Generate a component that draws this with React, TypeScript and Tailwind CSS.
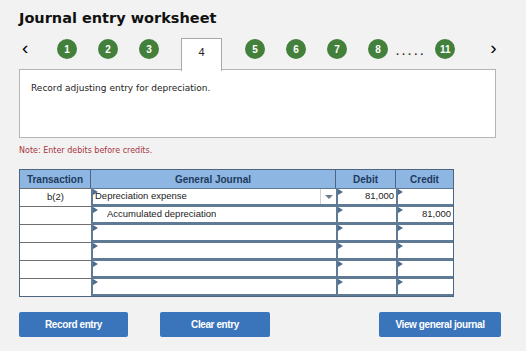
import React from "react";

const steps = ["1", "2", "3"];
const after = ["5", "6", "7", "8"];

function Circle({ n }: { n: string }) {
  return (
    <div className="w-[20px] h-[20px] rounded-full bg-[#43803c] text-white text-[10px] font-bold flex items-center justify-center mt-[1px]">
      {n}
    </div>
  );
}

function Marker() {
  return (
    <span className="absolute left-0 top-0 w-0 h-0 border-t-[3px] border-b-[3px] border-l-[5px] border-t-transparent border-b-transparent border-l-[#4d6d8f]" />
  );
}

function Cell({
  w,
  children,
  align = "left",
  pl = "pl-[2px]",
  dropdown = false,
}: {
  w: string;
  children?: React.ReactNode;
  align?: "left" | "right";
  pl?: string;
  dropdown?: boolean;
}) {
  return (
    <div
      className={`relative ${w} h-full bg-white border-l-2 border-b-2 border-t border-[#5f7a95] flex items-center ${pl} pr-[2px] ${
        align === "right" ? "justify-end" : ""
      }`}
    >
      <Marker />
      <span className="truncate">{children}</span>
      {dropdown && (
        <div className="absolute right-0 top-0 h-full w-[16px] border-l border-[#d0d0d0] flex items-center justify-center">
          <span className="w-0 h-0 border-l-[4px] border-r-[4px] border-t-[4px] border-l-transparent border-r-transparent border-t-[#6b7c8c]" />
        </div>
      )}
    </div>
  );
}

const rows = [
  { t: "b(2)", gj: "Depreciation expense", indent: false, d: "81,000", c: "" },
  { t: "", gj: "Accumulated depreciation", indent: true, d: "", c: "81,000" },
  { t: "", gj: "", indent: false, d: "", c: "" },
  { t: "", gj: "", indent: false, d: "", c: "" },
  { t: "", gj: "", indent: false, d: "", c: "" },
  { t: "", gj: "", indent: false, d: "", c: "" },
];

export default function App() {
  return (
    <div className="w-[526px] h-[351px] bg-[#f2f2f2] px-[19px] pt-[8px] overflow-hidden text-[#222]">
      <h1 className="text-[14.5px] leading-[20px] font-bold font-['DejaVu_Sans',sans-serif] text-[#111]">
        Journal entry worksheet
      </h1>

      {/* step nav */}
      <div className="flex items-start h-[32px] mt-[10px] font-['Liberation_Sans',Arial,sans-serif]">
        <span className="text-[19px] leading-[20px] ml-[3px] w-[35px] text-black">&lsaquo;</span>
        <div className="flex gap-[21px]">
          {steps.map((s) => (
            <Circle key={s} n={s} />
          ))}
        </div>
        <div className="ml-[22px] w-[41px] h-[33px] bg-white border border-b-0 border-[#a8a8a8] flex justify-center pt-[5px] text-[11px] relative z-10">
          4
        </div>
        <div className="flex gap-[21px] ml-[23px]">
          {after.map((s) => (
            <Circle key={s} n={s} />
          ))}
        </div>
        <span className="ml-[8px] mt-[5px] text-[11px] font-bold tracking-[3px] text-[#333]">.....</span>
        <div className="ml-[9px]">
          <Circle n="11" />
        </div>
        <span className="ml-[35px] text-[19px] leading-[20px] text-black">&rsaquo;</span>
      </div>

      {/* content box */}
      <div className="w-[477px] h-[69px] -mt-[1px] bg-white border border-[#b4b4b4] px-[11px] pt-[12px]">
        <p className="text-[9px] font-['DejaVu_Sans',sans-serif] text-[#222]">
          Record adjusting entry for depreciation.
        </p>
      </div>

      <p className="mt-[7px] text-[8px] font-['DejaVu_Sans',sans-serif] text-[#a8353d]">
        Note: Enter debits before credits.
      </p>

      {/* table */}
      <div className="mt-[12px] w-[435px] border border-[#4d6580] font-['Liberation_Sans',Arial,sans-serif] text-[9.5px]">
        <div className="flex h-[18px] bg-[#8db6e3] text-[#1e3a5c] font-bold text-[10px]">
          <div className="w-[71px] flex items-center justify-center border-r border-[#4d6580]">Transaction</div>
          <div className="w-[245px] flex items-center justify-center border-r border-[#4d6580]">General Journal</div>
          <div className="w-[60px] flex items-center justify-center border-r border-[#4d6580]">Debit</div>
          <div className="flex-1 flex items-center justify-center">Credit</div>
        </div>
        {rows.map((r, i) => (
          <div key={i} className="flex h-[18px] text-[#222]">
            <div className="w-[71px] h-full bg-white border-t border-[#707070] flex items-center justify-center">
              {r.t}
            </div>
            <Cell w="w-[245px]" pl={r.indent ? "pl-[14px]" : "pl-[2px]"} dropdown={i === 0}>
              {r.gj}
            </Cell>
            <Cell w="w-[60px]" align="right">
              {r.d}
            </Cell>
            <Cell w="flex-1" align="right">
              {r.c}
            </Cell>
          </div>
        ))}
      </div>

      {/* buttons */}
      <div className="flex mt-[15px] font-['Liberation_Sans',Arial,sans-serif] text-[10px] font-bold text-white tracking-[-0.4px]">
        <button className="w-[109px] h-[25px] bg-[#3a74bb] rounded-[2px]">Record entry</button>
        <button className="ml-[32px] w-[110px] h-[25px] bg-[#3a74bb] rounded-[2px]">Clear entry</button>
        <button className="ml-auto mr-[6px] w-[122px] h-[25px] bg-[#3a74bb] rounded-[2px]">View general journal</button>
      </div>
    </div>
  );
}
